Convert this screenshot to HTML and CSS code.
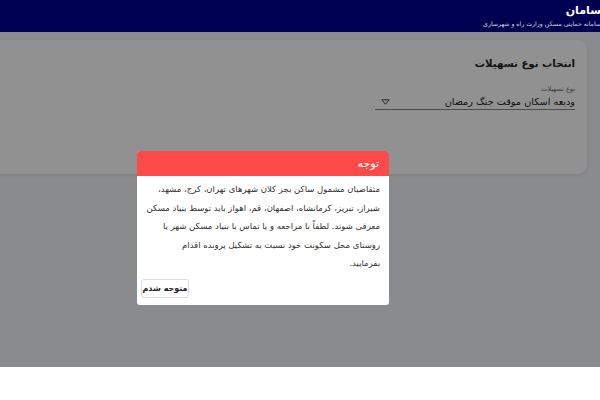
FILE: index.html
```html
<!DOCTYPE html>
<html lang="fa" dir="rtl">
<head>
<meta charset="utf-8">
<title>سامان</title>
<link rel="stylesheet" href="styles.css">
</head>
<body>
<header class="topbar">
  <div class="brand">
    <div class="brand-title">سامان</div>
    <div class="brand-sub">سامانه حمایتی مسکن وزارت راه و شهرسازی</div>
  </div>
</header>
<main class="page">
  <section class="card">
    <h2 class="card-title">انتخاب نوع تسهیلات</h2>
    <div class="field">
      <div class="field-label">نوع تسهیلات</div>
      <div class="select">
        <span class="select-value">ودیعه اسکان موقت جنگ رمضان</span>
        <svg class="caret" width="9" height="6" viewBox="0 0 9 6"><path d="M0.8 0.8 H8.2 L4.5 5.2 Z" fill="none" stroke="#333" stroke-width="0.9" stroke-linejoin="round"/></svg>
      </div>
    </div>
  </section>
</main>
<div class="overlay"></div>
<div class="modal">
  <div class="modal-head">توجه</div>
  <div class="modal-body">
    <p class="modal-text"><span class="line">متقاضیان مشمول ساکن بجز کلان شهرهای تهران، کرج، مشهد،</span> <span class="line">شیراز، تبریز، کرمانشاه، اصفهان، قم، اهواز باید توسط بنیاد مسکن</span> <span class="line">معرفی شوند. لطفاً با مراجعه و یا تماس با بنیاد مسکن شهر یا</span> <span class="line">روستای محل سکونت خود نسبت به تشکیل پرونده اقدام</span> <span class="line">بفرمایید.</span></p>
    <div class="modal-actions"><button class="btn">متوجه شدم</button></div>
  </div>
</div>
</body>
</html>
```

FILE: styles.css
```css
* { box-sizing: border-box; }
html, body { margin: 0; padding: 0; }
body {
  width: 600px;
  height: 400px;
  overflow: hidden;
  background: #ffffff;
  font-family: "DejaVu Sans", "Noto Sans", sans-serif;
  position: relative;
}
.topbar {
  height: 32px;
  background: #000050;
  color: #fff;
  display: flex;
  justify-content: flex-start;
  position: relative;
  z-index: 3;
}
.brand {
  margin-right: -1px;
  padding-top: 3px;
  display: flex;
  flex-direction: column;
  align-items: flex-start;
}
.brand-title { font-size: 11px; font-weight: bold; line-height: 15px; }
.brand-sub { font-size: 6.2px; line-height: 11px; opacity: 0.8; }
.page {
  height: 335px;
  background: #f2f4f7;
  padding-top: 8px;
  display: flex;
}
.card {
  width: 607px;
  margin-right: 13px;
  margin-left: -20px;
  height: 134px;
  background: #fff;
  border-radius: 9px;
  box-shadow: 0 1px 4px rgba(0,0,0,0.08);
  padding: 15px 12px 0 0;
}
.card-title {
  margin: 0;
  font-size: 10.2px;
  font-weight: bold;
  line-height: 18px;
  color: #222;
}
.field { margin-top: 12px; width: 200px; }
.field-label { font-size: 6.5px; color: #666; line-height: 9px; }
.select {
  display: flex;
  justify-content: space-between;
  align-items: center;
  border-bottom: 1px solid #888;
  height: 16px;
}
.select-value { font-size: 9.7px; color: #222; }
.caret { margin-left: 6px; }
.overlay {
  position: absolute;
  top: 32px;
  left: 0;
  width: 600px;
  height: 335px;
  background: rgba(0,0,0,0.43);
  z-index: 4;
}
.modal {
  position: absolute;
  top: 151px;
  left: 137px;
  width: 252px;
  background: #fff;
  border-radius: 3px;
  overflow: hidden;
  z-index: 5;
}
.modal-head {
  background: #ff4a4a;
  color: #fff;
  height: 25px;
  font-size: 11px;
  line-height: 25px;
  padding-right: 10px;
}
.modal-body { padding: 4px 9px 7px 4px; }
.modal-text {
  margin: 0;
  font-size: 8.5px;
  line-height: 18.5px;
  color: #333;
  padding-left: 2px;
  text-align: right;
}
.line {
  display: block;
  white-space: nowrap;
}
.modal-actions { display: flex; justify-content: flex-end; margin-top: 6px; }
.btn {
  font-family: inherit;
  font-size: 8px;
  font-weight: bold;
  color: #222;
  background: #fff;
  border: 1px solid #ddd;
  border-radius: 3px;
  width: 48px;
  height: 19px;
  padding: 0;
}
```
